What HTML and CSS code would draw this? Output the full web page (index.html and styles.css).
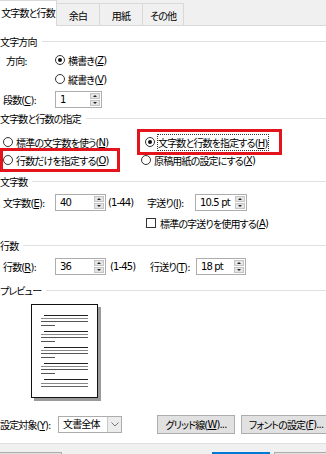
FILE: index.html
```html
<!DOCTYPE html>
<html lang="ja">
<head>
    <meta charset="UTF-8">
    <title>ページ設定</title>
    <link rel="stylesheet" href="styles.css">
</head>
<body>
    <div class="dialog">
        <div class="tabs">
            <div class="tab active">文字数と行数</div>
            <div class="tab t-margin">余白</div>
            <div class="tab t-paper">用紙</div>
            <div class="tab t-other">その他</div>
        </div>
        <div class="body">
            <div class="title t1">文字方向</div>
            <div class="row r-dir">
                <span class="label">方向:</span>
                <span class="radio on"><i></i>横書き(<u>Z</u>)</span>
            </div>
            <div class="row r-dir2">
                <span class="label"></span>
                <span class="radio"><i></i>縦書き(<u>V</u>)</span>
            </div>
            <div class="row r-cols">
                <span class="label">段数(<u>C</u>):</span>
                <div class="spin w-cols"><span class="val">1</span><span class="arrows"><b class="up"></b><b class="dn"></b></span></div>
            </div>
            <div class="title t2">文字数と行数の指定</div>
            <div class="choice">
                <span class="radio"><i></i>標準の文字数を使う(<u>N</u>)</span>
                <span class="radio on mark mark-r"><i></i><span class="focus">文字数と行数を指定する(<u>H</u>)</span></span>
                <span class="radio mark mark-l"><i></i>行数だけを指定する(<u>O</u>)</span>
                <span class="radio"><i></i>原稿用紙の設定にする(<u>X</u>)</span>
            </div>
            <div class="title t3">文字数</div>
            <div class="row r-chars">
                <span class="label">文字数(<u>E</u>):</span>
                <div class="spin w-num"><span class="val">40</span><span class="arrows"><b class="up"></b><b class="dn"></b></span></div>
                <span class="range">(1-44)</span>
                <span class="label2">字送り(<u>I</u>):</span>
                <div class="spin w-pitch"><span class="val">10.5 pt</span><span class="arrows"><b class="up"></b><b class="dn"></b></span></div>
            </div>
            <div class="row r-check">
                <span class="check"><i></i>標準の字送りを使用する(<u>A</u>)</span>
            </div>
            <div class="title t4">行数</div>
            <div class="row r-lines">
                <span class="label">行数(<u>R</u>):</span>
                <div class="spin w-num"><span class="val">36</span><span class="arrows"><b class="up"></b><b class="dn"></b></span></div>
                <span class="range range2">(1-45)</span>
                <span class="label2 label3">行送り(<u>T</u>):</span>
                <div class="spin w-pitch2"><span class="val">18 pt</span><span class="arrows"><b class="up"></b><b class="dn"></b></span></div>
            </div>
            <div class="title t5">プレビュー</div>
            <div class="preview">
                <svg width="71" height="98" viewBox="0 0 71 98">
                    <rect x="3" y="3" width="67" height="94" fill="#9a9a9a"/>
                    <rect x="0.5" y="0.5" width="66" height="93" fill="#fff" stroke="#111"/>
                    <g stroke-width="1">
                        <g transform="translate(0,11)">
                            <line x1="13" x2="57" y1="0.5" y2="0.5" stroke="#222"/>
                            <line x1="10" x2="57" y1="3.5" y2="3.5" stroke="#888"/>
                            <line x1="10" x2="57" y1="6.5" y2="6.5" stroke="#555"/>
                            <line x1="10" x2="24" y1="10.5" y2="10.5" stroke="#555"/>
                        </g>
                        <g transform="translate(0,27)">
                            <line x1="13" x2="57" y1="0.5" y2="0.5" stroke="#222"/>
                            <line x1="10" x2="57" y1="3.5" y2="3.5" stroke="#888"/>
                            <line x1="10" x2="57" y1="6.5" y2="6.5" stroke="#555"/>
                            <line x1="10" x2="24" y1="10.5" y2="10.5" stroke="#555"/>
                        </g>
                        <g transform="translate(0,43)">
                            <line x1="13" x2="57" y1="0.5" y2="0.5" stroke="#222"/>
                            <line x1="10" x2="57" y1="3.5" y2="3.5" stroke="#888"/>
                            <line x1="10" x2="57" y1="6.5" y2="6.5" stroke="#555"/>
                            <line x1="10" x2="24" y1="10.5" y2="10.5" stroke="#555"/>
                        </g>
                        <g transform="translate(0,59)">
                            <line x1="13" x2="57" y1="0.5" y2="0.5" stroke="#222"/>
                            <line x1="10" x2="57" y1="3.5" y2="3.5" stroke="#888"/>
                            <line x1="10" x2="57" y1="6.5" y2="6.5" stroke="#555"/>
                            <line x1="10" x2="24" y1="10.5" y2="10.5" stroke="#555"/>
                        </g>
                        <g transform="translate(0,75)">
                            <line x1="13" x2="57" y1="0.5" y2="0.5" stroke="#222"/>
                            <line x1="10" x2="57" y1="4.5" y2="4.5" stroke="#888"/>
                            <line x1="10" x2="57" y1="7.5" y2="7.5" stroke="#666"/>
                        </g>
                    </g>
                </svg>
            </div>
            <div class="row r-apply">
                <span class="label4">設定対象(<u>Y</u>):</span>
                <div class="select"><span class="val">文書全体</span><span class="drop"><svg width="8" height="5" viewBox="0 0 8 5"><path d="M0.5 0.5 L4 4 L7.5 0.5" fill="none" stroke="#777"/></svg></span></div>
                <span class="btn b-grid">グリッド線(<u>W</u>)...</span>
                <span class="btn b-font">フォントの設定(<u>F</u>)...</span>
            </div>
        </div>
        <div class="footer">
            <span class="fbtn f1"></span>
            <span class="fbtn f2"></span>
            <span class="fbtn f3"></span>
        </div>
    </div>
</body>
</html>
```

FILE: styles.css
```css
body {
    margin: 0;
    font-family: "DejaVu Sans", "Noto Sans CJK JP", sans-serif;
    font-size: 10px;
    letter-spacing: -0.85px;
    font-feature-settings: "palt";
    color: #000;
    background: #fff;
    overflow: hidden;
}
u {
    text-decoration-thickness: 1px;
    text-underline-offset: 1px;
}
.dialog {
    width: 326px;
    height: 454px;
    display: flex;
    flex-direction: column;
    overflow: hidden;
}

/* tabs */
.tabs {
    height: 26px;
    flex: none;
    box-sizing: border-box;
    background: #f0f0f0;
    border-bottom: 1px solid #d9d9d9;
    display: flex;
    align-items: flex-end;
}
.tab {
    height: 22px;
    box-sizing: border-box;
    border: 1px solid #d9d9d9;
    border-bottom: none;
    margin-left: -1px;
    display: flex;
    align-items: center;
    justify-content: center;
    padding-top: 1px;
}
.tab.active {
    height: 26px;
    width: 58px;
    margin-left: -1px;
    margin-bottom: -1px;
    background: #fff;
    padding-top: 0;
    padding-bottom: 2px;
}
.t-margin { width: 44px; }
.t-paper { width: 44px; }
.t-other { width: 42px; }

/* body */
.body {
    flex: 1;
    padding-top: 6px;
    display: flex;
    flex-direction: column;
}
.title {
    display: flex;
    align-items: center;
    height: 18px;
    flex: none;
}
.title::after {
    content: "";
    flex: 1;
    border-top: 1px solid #e0e0e0;
    margin-left: 5px;
}
.t2 { height: 16px; }
.t4 { height: 26px; }
.t5 { margin-top: 7px; }

.row {
    display: flex;
    align-items: center;
    flex: none;
}
.r-dir { height: 20px; }
.r-dir2 { height: 18px; }
.r-cols { height: 22px; }
.r-chars { height: 24px; }
.r-check { height: 18px; padding-left: 146px; }
.r-lines { height: 16px; }
.label {
    width: 52px;
    padding-left: 3px;
    flex: none;
}
.r-dir .label { padding-left: 6px; width: 49px; }

/* radios and checkbox */
.radio, .check {
    display: flex;
    align-items: center;
    white-space: nowrap;
}
.radio i, .check i {
    width: 10px;
    height: 10px;
    box-sizing: border-box;
    border: 1px solid #333;
    border-radius: 50%;
    background: #fff;
    margin-right: 3px;
    display: flex;
    align-items: center;
    justify-content: center;
    flex: none;
}
.radio.on i::after {
    content: "";
    width: 4px;
    height: 4px;
    border-radius: 50%;
    background: #111;
}
.check i {
    border-radius: 0;
    margin-right: 4px;
}
.choice {
    display: grid;
    grid-template-columns: 138px 1fr;
    grid-auto-rows: 18px;
    padding: 7px 0 3px 3px;
    flex: none;
}
.choice .radio { height: 18px; }
.mark-r {
    width: 137px;
    padding-left: 4px;
    box-sizing: border-box;
    outline: 3px solid #e3141b;
    outline-offset: 1px;
}
.mark-r i { margin-right: 3px; }
.mark-l {
    width: 114px;
    outline: 3px solid #e3141b;
}
.focus {
    outline: 1px dotted #333;
    outline-offset: 0;
}

/* spin boxes */
.spin {
    display: flex;
    height: 17px;
    box-sizing: border-box;
    border: 1px solid #adadad;
    background: #fff;
    flex: none;
}
.spin .val {
    flex: 1;
    padding-left: 4px;
    line-height: 15px;
}
.arrows {
    width: 10px;
    margin: 1px 1px 1px 0;
    display: flex;
    flex-direction: column;
    gap: 1px;
}
.arrows b {
    flex: 1;
    background: #e5e5e5;
    border: 1px solid #c4c4c4;
    position: relative;
}
.arrows b::after {
    content: "";
    position: absolute;
    left: 2px;
    top: 1px;
    border-left: 2px solid transparent;
    border-right: 2px solid transparent;
}
.arrows .up::after { border-bottom: 2px solid #222; }
.arrows .dn::after { border-top: 2px solid #222; }
.w-cols { width: 47px; }
.w-num { width: 51px; }
.w-pitch { width: 52px; }
.w-pitch2 { width: 50px; }
.range {
    width: 39px;
    padding-left: 2px;
    flex: none;
}
.range2 { width: 40px; padding-left: 4px; }
.label2 {
    width: 48px;
    flex: none;
}
.label3 { width: 46px; }

/* preview */
.preview {
    margin: 5px 0 0 31px;
    height: 98px;
    flex: none;
}
.preview svg { display: block; }

/* bottom row */
.r-apply {
    margin-top: 12px;
    height: 20px;
}
.label4 {
    width: 58px;
    flex: none;
}
.select {
    width: 64px;
    height: 17px;
    box-sizing: border-box;
    border: 1px solid #acacac;
    display: flex;
    flex: none;
}
.select .val {
    flex: 1;
    padding-left: 4px;
    line-height: 15px;
}
.select .drop {
    width: 13px;
    background: #ececec;
    border-left: 1px solid #c8c8c8;
    display: flex;
    align-items: center;
    justify-content: center;
}
.btn {
    height: 19px;
    box-sizing: border-box;
    border: 1px solid #adadad;
    background: #e1e1e1;
    display: flex;
    align-items: center;
    justify-content: center;
    white-space: nowrap;
    flex: none;
}
.b-grid { width: 78px; margin-left: 35px; }
.b-font { width: 90px; margin-left: 6px; }

/* footer */
.footer {
    height: 11px;
    flex: none;
    box-sizing: border-box;
    background: #f0f0f0;
    border-top: 1px solid #dfdfdf;
    display: flex;
    align-items: flex-start;
    padding-top: 8px;
}
.fbtn {
    height: 10px;
    box-sizing: border-box;
    border: 1px solid #adadad;
    border-bottom: none;
    background: #e1e1e1;
    flex: none;
}
.f1 { width: 67px; margin-left: -5px; }
.f2 { width: 58px; margin-left: 150px; border: 2px solid #0078d7; border-bottom: none; }
.f3 { width: 60px; margin-left: 4px; }
```
